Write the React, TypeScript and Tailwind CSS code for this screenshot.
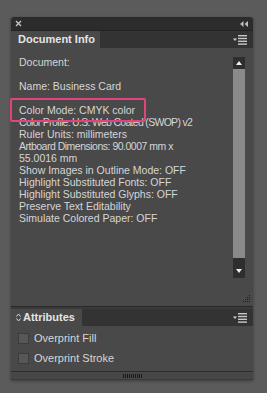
import React from "react";

const font = { fontFamily: '"Liberation Sans", Arial, sans-serif' };

function MenuIcon() {
  return (
    <svg width="14" height="10" viewBox="0 0 14 10" className="block">
      <path d="M0 3.5h4l-2 2.5z" fill="#d0d0d0" />
      <rect x="5" y="0" width="9" height="1.4" fill="#c8c8c8" />
      <rect x="5" y="2.8" width="9" height="1.4" fill="#c8c8c8" />
      <rect x="5" y="5.6" width="9" height="1.4" fill="#c8c8c8" />
      <rect x="5" y="8.4" width="9" height="1.4" fill="#c8c8c8" />
    </svg>
  );
}

// [text, tighter tracking]
const lines: [string, string][] = [
  ["Document:", ""],
  ["", ""],
  ["Name: Business Card", ""],
  ["", ""],
  ["Color Mode: CMYK color", ""],
  ["Color Profile: U.S. Web Coated (SWOP) v2", "tracking-[-0.7px]"],
  ["Ruler Units: millimeters", ""],
  ["Artboard Dimensions: 90.0007 mm x", "tracking-[-0.5px]"],
  ["55.0016 mm", ""],
  ["Show Images in Outline Mode: OFF", ""],
  ["Highlight Substituted Fonts: OFF", ""],
  ["Highlight Substituted Glyphs: OFF", ""],
  ["Preserve Text Editability", ""],
  ["Simulate Colored Paper: OFF", ""],
];

export default function App() {
  return (
    <div
      className="w-[267px] h-[393px] bg-[#5b5b5b] pt-[17px] pl-[11px] overflow-hidden"
      style={font}
    >
      <div className="w-[242px] flex flex-col shadow-[0_1px_3px_rgba(0,0,0,0.35)]">
        {/* title bar */}
        <div className="h-[14px] bg-[#2c2c2c] rounded-t-[3px] flex items-center justify-between px-[4px] border-b border-[#222]">
          <svg width="7" height="7" viewBox="0 0 7 7">
            <path d="M1 1l5 5M6 1l-5 5" stroke="#c8c8c8" strokeWidth="1.3" />
          </svg>
          <svg width="8" height="6" viewBox="0 0 8 6" className="mr-[1px]">
            <path d="M3.5 0v6L0 3z M8 0v6L4.5 3z" fill="#bdbdbd" />
          </svg>
        </div>
        {/* tab row */}
        <div className="h-[17px] bg-[#333] flex items-stretch justify-between">
          <div className="w-[89px] bg-[#494949] text-[11px] font-bold text-[#e4e4e4] pl-[7px] flex items-center whitespace-nowrap">
            Document Info
          </div>
          <div className="flex items-center pr-[6px]">
            <MenuIcon />
          </div>
        </div>
        {/* content */}
        <div className="h-[258px] bg-[#494949] relative flex">
          <div className="flex-1 pl-[8px] pt-[8px] text-[10.5px] leading-[12px] text-[#d6d6d6] whitespace-nowrap">
            {lines.map(([l, t], i) => (
              <div key={i} className={"h-[12px] " + t}>
                {l}
              </div>
            ))}
          </div>
          <div className="absolute left-[-1px] top-[50px] w-[136px] h-[24px] border-2 border-[#e2437d] rounded-[2px]" />
          <div className="w-[12px] mr-[8px] mt-[9px] h-[221px] flex flex-col">
            <div className="h-[12px] bg-[#2e2e2e] flex items-center justify-center">
              <svg width="6" height="4" viewBox="0 0 6 4">
                <path d="M0 4L3 0l3 4z" fill="#f0f0f0" />
              </svg>
            </div>
            <div className="flex-1 bg-[#8a8a8a]" />
            <div className="h-[20px] bg-[#2e2e2e] flex items-end justify-center pb-[5px]">
              <svg width="6" height="4" viewBox="0 0 6 4">
                <path d="M0 0h6L3 4z" fill="#f0f0f0" />
              </svg>
            </div>
          </div>
          <svg
            width="8"
            height="8"
            viewBox="0 0 8 8"
            className="absolute right-[2px] bottom-[3px]"
          >
            {[
              [6, 0],
              [4, 2],
              [6, 2],
              [2, 4],
              [4, 4],
              [6, 4],
              [0, 6],
              [2, 6],
              [4, 6],
              [6, 6],
            ].map(([x, y], i) => (
              <rect key={i} x={x} y={y} width="1" height="1" fill="#1e1e1e" />
            ))}
          </svg>
        </div>
        {/* separator */}
        <div className="h-[3px] bg-[#3a3a3a] border-t border-[#2a2a2a]" />
        {/* attributes tab row */}
        <div className="h-[17px] bg-[#333] flex items-stretch justify-between">
          <div className="w-[71px] bg-[#494949] flex items-center pl-[5px] gap-[2px] whitespace-nowrap">
            <svg width="5" height="9" viewBox="0 0 5 9">
              <path d="M0.5 3.5L2.5 1l2 2.5M0.5 5.5L2.5 8l2-2.5" stroke="#d8d8d8" strokeWidth="1" fill="none" />
            </svg>
            <span className="text-[11px] font-bold text-[#e4e4e4]">Attributes</span>
          </div>
          <div className="flex items-center pr-[6px]">
            <MenuIcon />
          </div>
        </div>
        {/* attributes content */}
        <div className="h-[46px] bg-[#494949] flex flex-col gap-[9px] pt-[7px] pl-[7px] border-b border-[#2c2c2c]">
          {["Overprint Fill", "Overprint Stroke"].map((t) => (
            <div key={t} className="flex items-center gap-[5px] h-[11px]">
              <div className="w-[11px] h-[11px] bg-[#575757] border border-[#3c3c3c]" />
              <span className="text-[11px] text-[#d6d6d6]">{t}</span>
            </div>
          ))}
        </div>
        {/* bottom bar */}
        <div className="h-[8px] bg-[#474747] flex items-center justify-center border-b border-[#3a3a3a]">
          <svg width="19" height="4" viewBox="0 0 19 4">
            {Array.from({ length: 10 }).map((_, i) => (
              <rect key={i} x={i * 2} y="0" width="1" height="4" fill="#1a1a1a" />
            ))}
          </svg>
        </div>
      </div>
    </div>
  );
}
